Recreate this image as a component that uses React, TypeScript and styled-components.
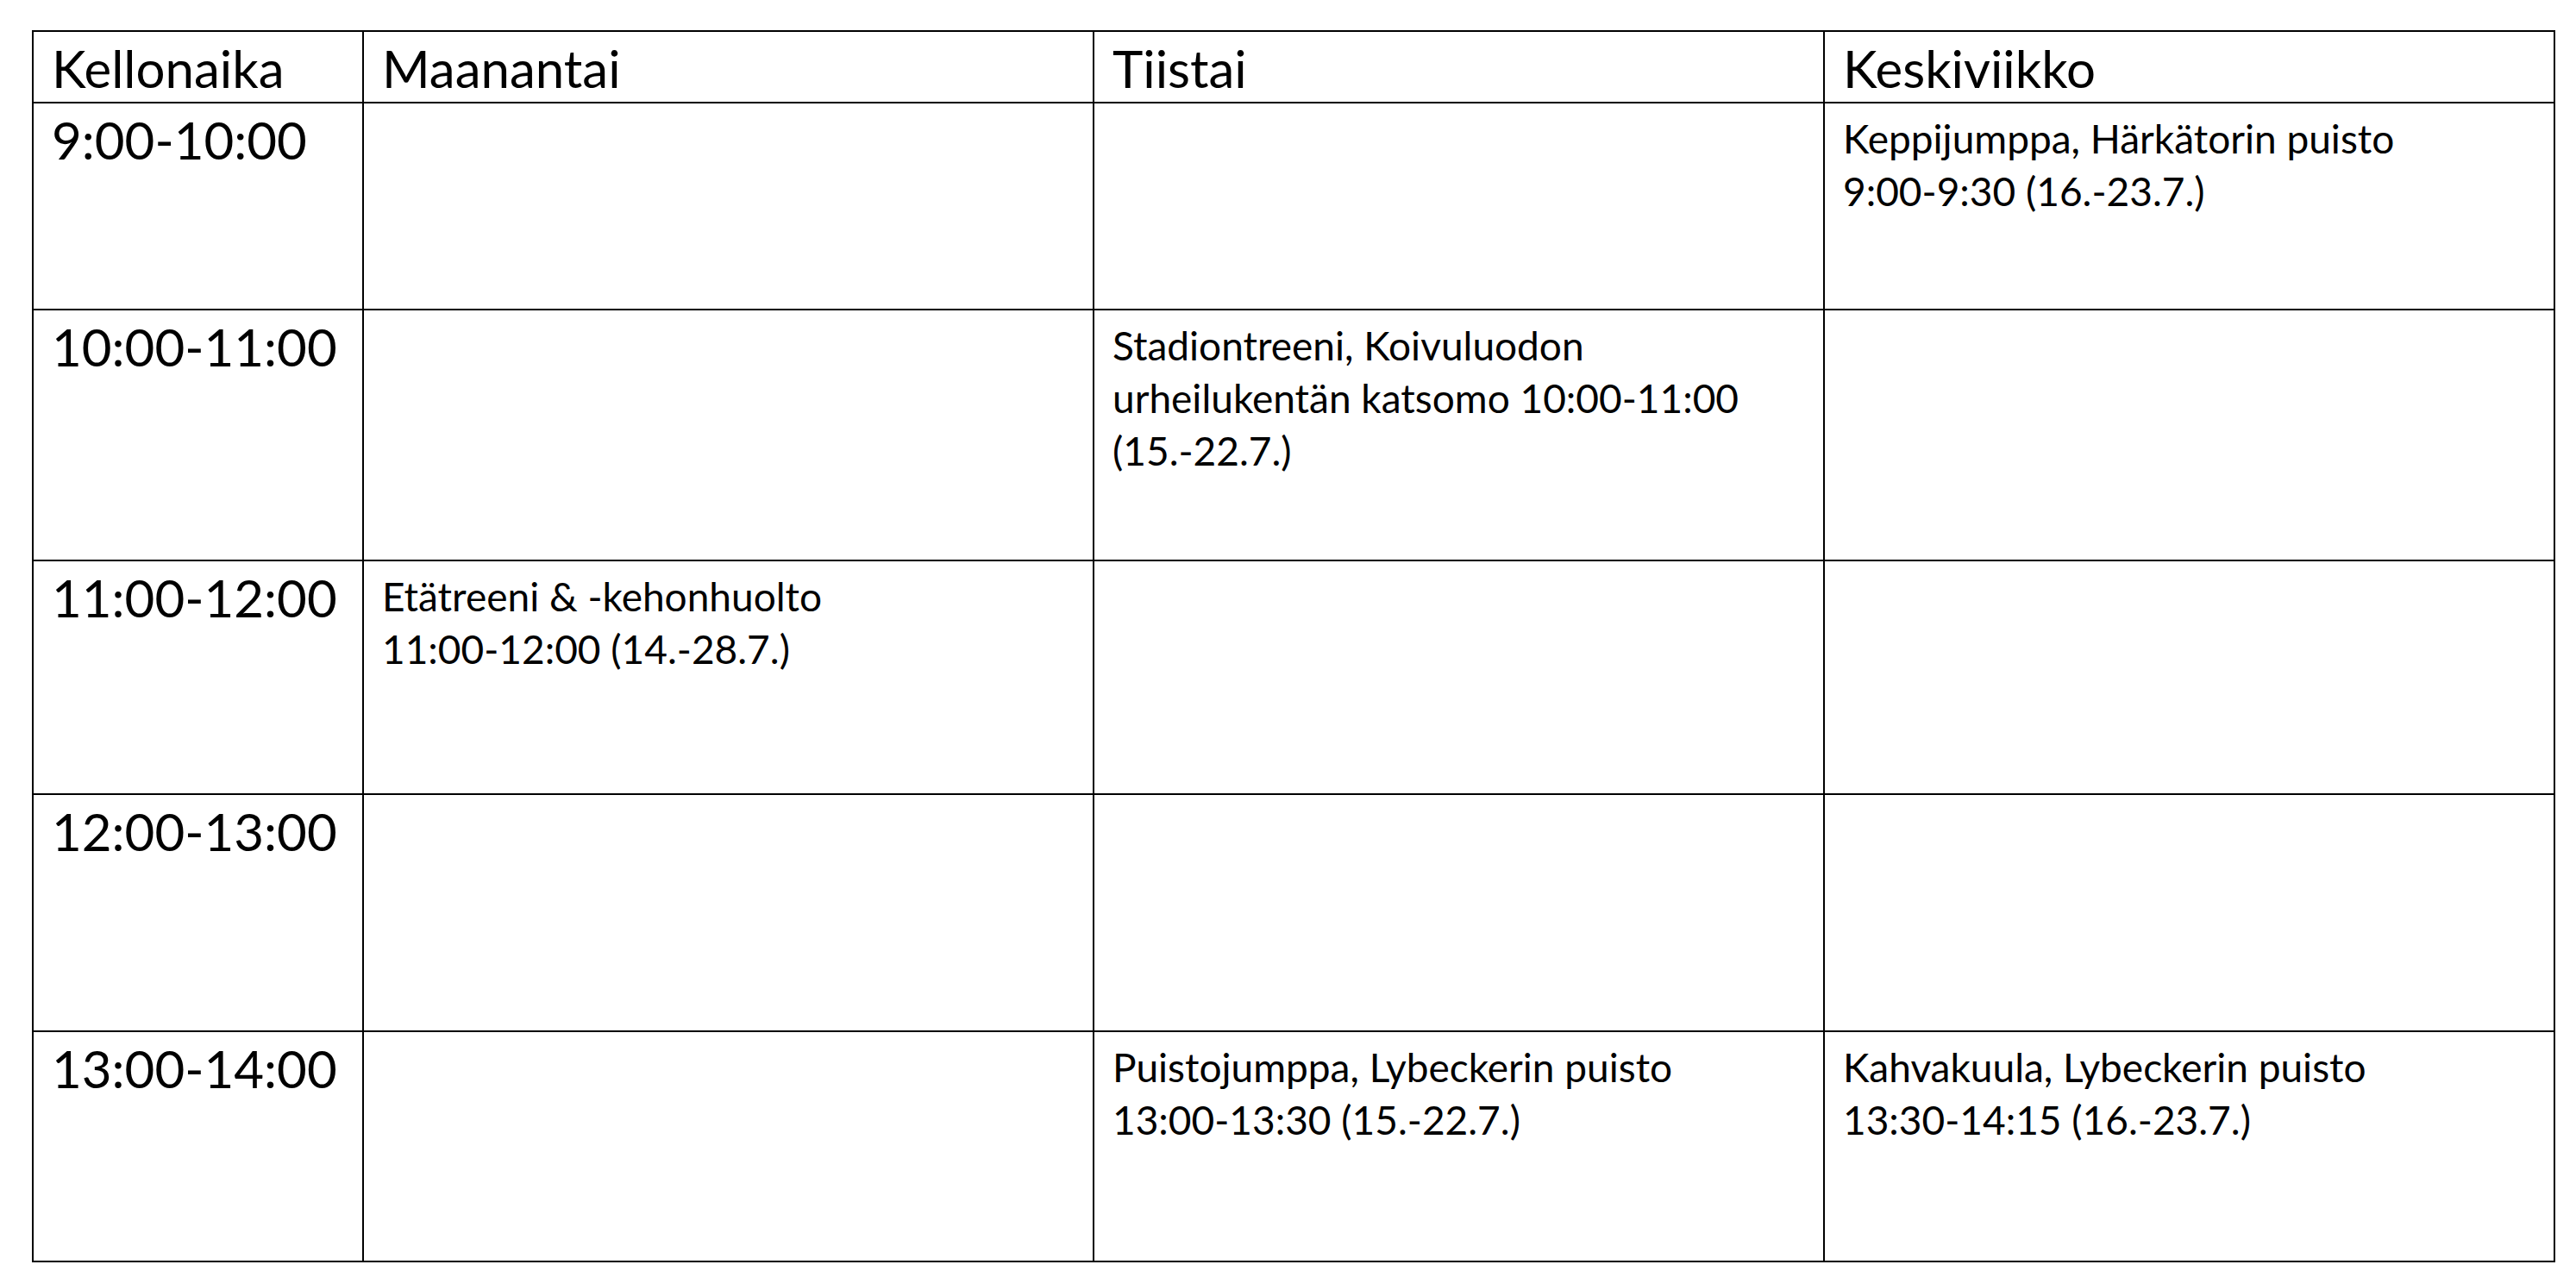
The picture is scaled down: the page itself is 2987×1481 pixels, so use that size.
import styled, { createGlobalStyle } from "styled-components";

const GlobalStyle = createGlobalStyle`
  html, body {
    margin: 0;
    padding: 0;
    background: #ffffff;
  }
  body {
    font-family: Lato, "Liberation Sans", sans-serif;
    color: #000000;
  }
`;

const days = ["Maanantai", "Tiistai", "Keskiviikko"];

const rows = [
  {
    time: "9:00-10:00",
    height: 240,
    cells: [[], [], ["Keppijumppa, Härkätorin puisto", "9:00-9:30 (16.-23.7.)"]],
  },
  {
    time: "10:00-11:00",
    height: 291,
    cells: [
      [],
      ["Stadiontreeni, Koivuluodon", "urheilukentän katsomo 10:00-11:00", "(15.-22.7.)"],
      [],
    ],
  },
  {
    time: "11:00-12:00",
    height: 271,
    cells: [["Etätreeni & -kehonhuolto", "11:00-12:00 (14.-28.7.)"], [], []],
  },
  {
    time: "12:00-13:00",
    height: 275,
    cells: [[], [], []],
  },
  {
    time: "13:00-14:00",
    height: 267,
    cells: [
      [],
      ["Puistojumppa, Lybeckerin puisto", "13:00-13:30 (15.-22.7.)"],
      ["Kahvakuula, Lybeckerin puisto", "13:30-14:15 (16.-23.7.)"],
    ],
  },
];

const App = () => {
  return (
    <>
      <GlobalStyle />
      <Page>
        <Schedule $rows={[83, ...rows.map((r) => r.height)]}>
          <HeadCell>Kellonaika</HeadCell>
          {days.map((d) => (
            <HeadCell key={d}>{d}</HeadCell>
          ))}
          {rows.map((row) => (
            <Row key={row.time} time={row.time} cells={row.cells} />
          ))}
        </Schedule>
      </Page>
    </>
  );
};

const Row = ({ time, cells }: { time: string; cells: string[][] }) => (
  <>
    <TimeCell>{time}</TimeCell>
    {cells.map((lines, i) => (
      <EventCell key={i}>
        {lines.map((line) => (
          <EventLine key={line}>{line}</EventLine>
        ))}
      </EventCell>
    ))}
  </>
);

export default App;

const Page = styled.div`
  padding: 35px 0 0 37px;
`;

const Schedule = styled.div<{ $rows: number[] }>`
  display: grid;
  grid-template-columns: 383px 847px 847px 847px;
  grid-template-rows: ${(p) => p.$rows.map((h) => `${h}px`).join(" ")};
  width: max-content;
  border-top: 2px solid #000;
  border-left: 2px solid #000;
`;

const Cell = styled.div`
  box-sizing: border-box;
  border-right: 2px solid #000;
  border-bottom: 2px solid #000;
  padding-left: 21px;
  white-space: nowrap;
`;

const HeadCell = styled(Cell)`
  font-size: 60px;
  line-height: 1.2;
  padding-top: 6px;
`;

const TimeCell = styled(Cell)`
  font-size: 60px;
  line-height: 1.2;
  padding-top: 6px;
`;

const EventCell = styled(Cell)`
  font-size: 46px;
  line-height: 61px;
  padding-top: 10px;
`;

const EventLine = styled.div``;
